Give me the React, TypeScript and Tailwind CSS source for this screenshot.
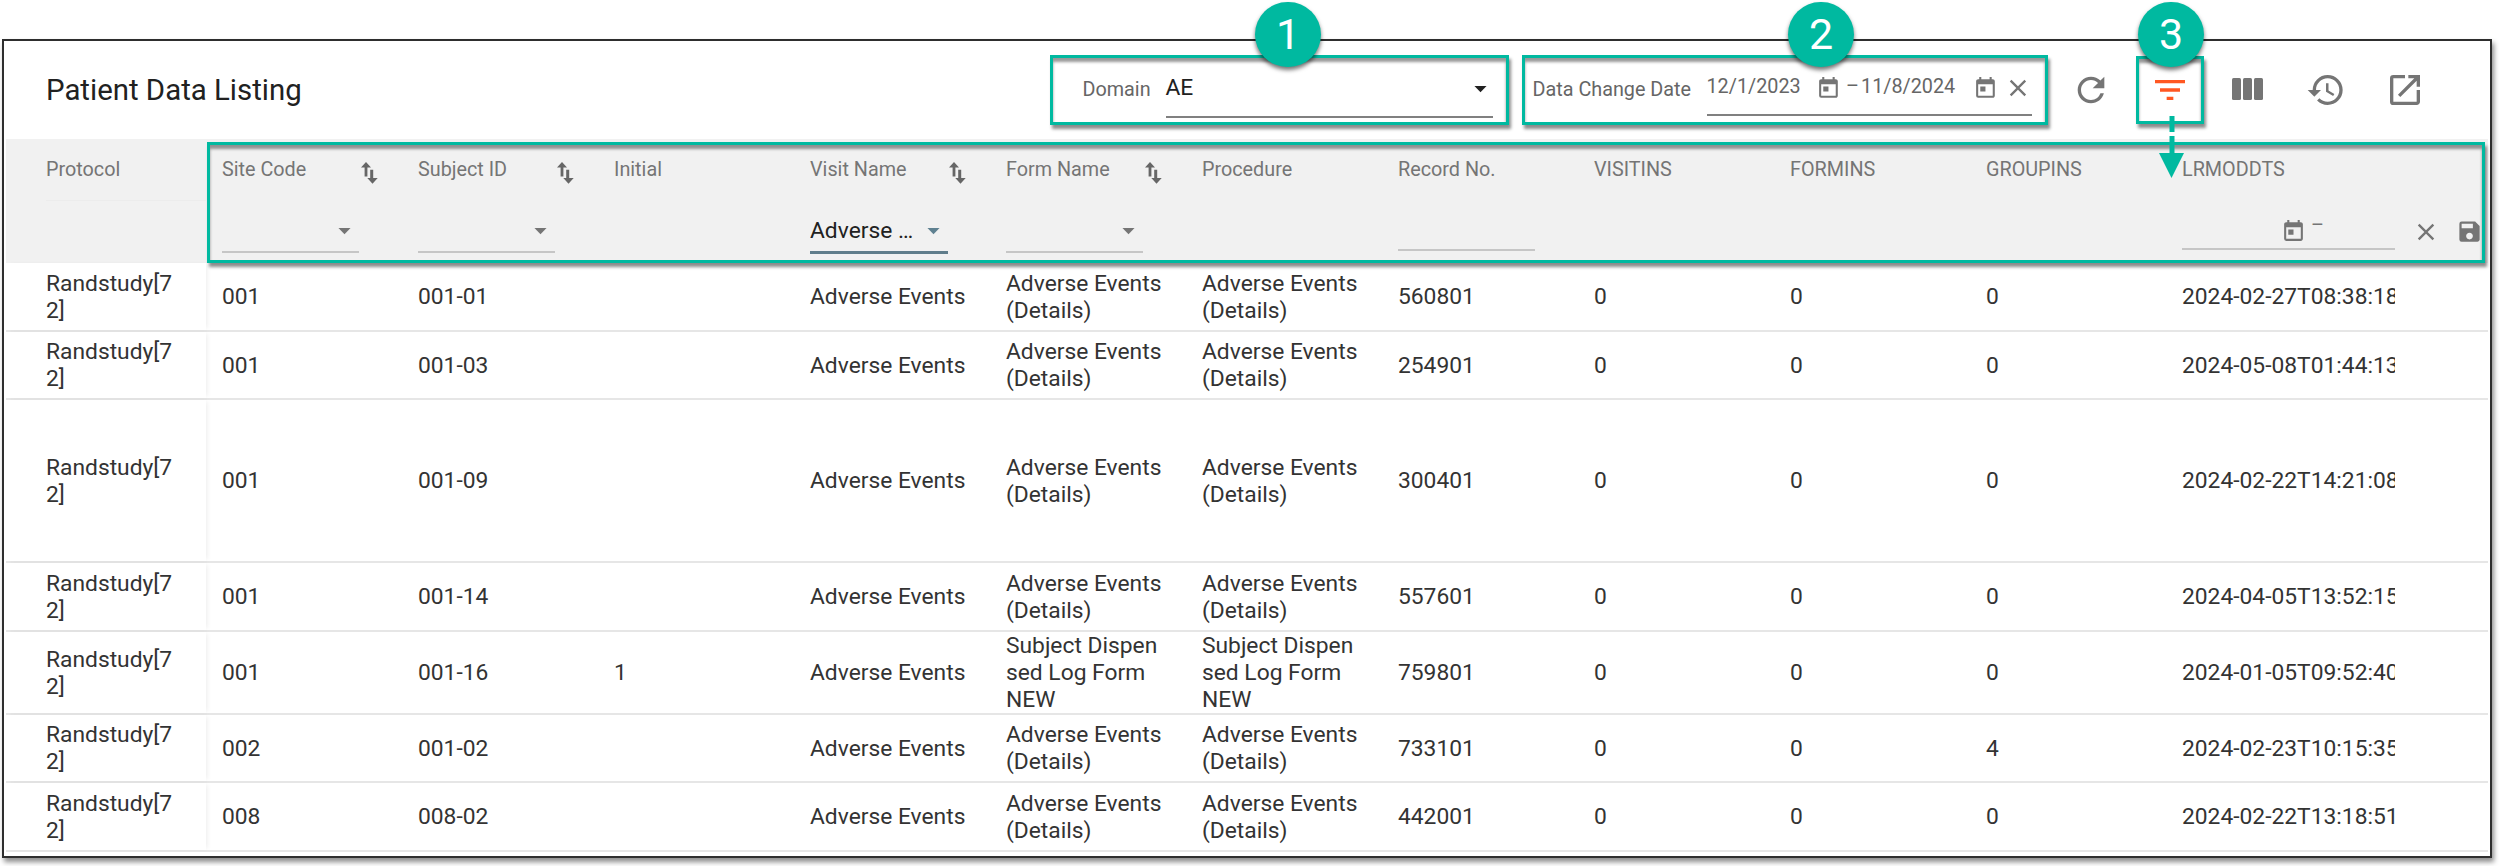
import { ReactNode } from "react";
import {
  MdArrowDropDown,
  MdClose,
  MdFilterList,
  MdHistory,
  MdOpenInNew,
  MdRefresh,
  MdSave,
  MdToday,
} from "react-icons/md";

const rows = [
  { h: "h-[69px]", site: "001", subject: "001-01", initial: "", record: "560801", group: "0", ts: "2024-02-27T08:38:18", form: "Adverse Events (Details)" },
  { h: "h-[68px]", site: "001", subject: "001-03", initial: "", record: "254901", group: "0", ts: "2024-05-08T01:44:13", form: "Adverse Events (Details)" },
  { h: "h-[163px]", site: "001", subject: "001-09", initial: "", record: "300401", group: "0", ts: "2024-02-22T14:21:08", form: "Adverse Events (Details)" },
  { h: "h-[69px]", site: "001", subject: "001-14", initial: "", record: "557601", group: "0", ts: "2024-04-05T13:52:15", form: "Adverse Events (Details)" },
  { h: "h-[83px]", site: "001", subject: "001-16", initial: "1", record: "759801", group: "0", ts: "2024-01-05T09:52:40", form: "Subject Dispensed Log Form NEW" },
  { h: "h-[68px]", site: "002", subject: "001-02", initial: "", record: "733101", group: "4", ts: "2024-02-23T10:15:35", form: "Adverse Events (Details)" },
  { h: "h-[69px]", site: "008", subject: "008-02", initial: "", record: "442001", group: "0", ts: "2024-02-22T13:18:51", form: "Adverse Events (Details)" },
];

const highlight =
  "border-[3px] border-[#00b9a0] shadow-[2px_4px_3px_rgba(0,0,0,0.45),inset_0_4px_3px_rgba(0,0,0,0.4)]";

function SortIcon() {
  return (
    <svg width="17" height="22" viewBox="0 0 17 22" className="mt-[6px] text-[#666666]" fill="currentColor">
      <path d="M0 5.5 5 0l5 5.5H6.4v9H3.6v-9z" />
      <path d="M9.2 7.7h3v8.3h4.5l-5.2 5.7L6.3 16h2.9z" />
    </svg>
  );
}

function Caret({ className = "text-[#757575]" }: { className?: string }) {
  return <MdArrowDropDown size={29} className={`shrink-0 ${className}`} />;
}

function HeadCell({ label, sort, children }: { label: string; sort?: boolean; children?: ReactNode }) {
  return (
    <div className="pl-4">
      <div className="flex h-[61px] items-center justify-between pr-6 text-[19.8px] text-[#757575]">
        <span>{label}</span>
        {sort && <SortIcon />}
      </div>
      {children}
    </div>
  );
}

function SelectFilter() {
  return (
    <div className="mt-4 flex h-[37px] w-[137px] items-start justify-end border-b-2 border-[#c6c6c6]">
      <Caret />
    </div>
  );
}

function Circle({ n, className }: { n: number; className: string }) {
  return (
    <div
      className={`absolute top-[2px] z-20 flex h-[65px] w-[66px] items-center justify-center rounded-full bg-[#00b9a0] text-[43px] leading-none text-white shadow-[0_3px_4px_rgba(0,0,0,0.55)] ${className}`}
    >
      {n}
    </div>
  );
}

export default function App() {
  return (
    <div className="relative h-[866px] w-[2500px] overflow-hidden bg-white pl-[2px] pt-[39px] font-['Roboto',sans-serif]">
      <Circle n={1} className="left-[1255px]" />
      <Circle n={2} className="left-[1788px]" />
      <Circle n={3} className="left-[2138px]" />

      {/* dashed arrow from the filter button to the filter row */}
      <svg width="26" height="64" viewBox="0 0 26 64" className="absolute left-[2159px] top-[116px] z-20" fill="#00b9a0">
        <rect x="10.5" y="0" width="5" height="16" />
        <rect x="10.5" y="20" width="5" height="17" />
        <path d="M0 37h25L12.5 62z" />
      </svg>

      <div className="h-[819px] w-[2490px] border-2 border-[#2e2e2e] shadow-[2px_4px_5px_rgba(0,0,0,0.45)]">
        {/* toolbar */}
        <div className="flex h-[98px] items-start pl-[42px] pr-[46px] pt-[14px]">
          <div className="flex h-[70px] flex-1 items-center text-[29.4px] text-[#212121]">Patient Data Listing</div>

          <div className={`flex h-[70px] w-[459px] ${highlight}`}>
            <span className="ml-[30px] mt-[20px] w-[83px] text-[19.8px] leading-[24px] text-[#666666]">Domain</span>
            <div className="flex h-[60px] w-[327px] items-center justify-between border-b-2 border-[#808080] pt-[2px]">
              <span className="text-[22.8px] text-[#212121]">AE</span>
              <Caret className="mr-[-2px] text-[#212121]" />
            </div>
          </div>

          <div className={`ml-[13px] flex h-[70px] w-[526px] ${highlight}`}>
            <span className="ml-[8px] mt-[20px] w-[174px] text-[19.8px] leading-[24px] text-[#666666]">Data Change Date</span>
            <div className="flex h-[58px] w-[325px] items-center border-b-2 border-[#808080] pt-[2px] text-[19.8px] text-[#666666]">
              <span className="w-[110px]">12/1/2023</span>
              <MdToday size={25} className="mt-[2px] text-[#757575]" />
              <span className="ml-[5px] mr-[2px]">–</span>
              <span className="w-[112px]">11/8/2024</span>
              <MdToday size={25} className="mt-[2px] text-[#757575]" />
              <MdClose size={28} className="ml-[6px] mt-[2px] text-[#757575]" />
            </div>
          </div>

          <div className="ml-[4px] flex h-[70px] text-[#757575]">
            <div className="flex w-[78.5px] items-center justify-center">
              <MdRefresh size={40} />
            </div>
            <div className="flex w-[78.5px] items-center justify-center">
              <div className={`ml-[2px] flex h-[68px] w-[68px] shrink-0 items-center justify-center ${highlight}`}>
                <MdFilterList size={40} className="text-[#ff5722]" />
              </div>
            </div>
            <div className="flex w-[78.5px] items-center justify-center">
              <svg width="31" height="22" viewBox="0 0 31 22" fill="currentColor" className="-mt-[3px]">
                <rect x="0" y="0" width="9" height="22" rx="1.5" />
                <rect x="11" y="0" width="9" height="22" rx="1.5" />
                <rect x="22" y="0" width="9" height="22" rx="1.5" />
              </svg>
            </div>
            <div className="flex w-[78.5px] items-center justify-center">
              <MdHistory size={40} />
            </div>
            <div className="flex w-[78.5px] items-center justify-center">
              <MdOpenInNew size={40} />
            </div>
          </div>
        </div>

        <div className="relative px-[2px]">
          {/* table head */}
          <div className="relative grid h-[124px] grid-cols-[200px_repeat(10,196px)_322px] bg-[#f1f1f1]">
            <div className="pl-[40px]">
              <div className="flex h-[62px] items-center border-b border-[#ececec] text-[19.8px] text-[#757575]">Protocol</div>
            </div>
            <HeadCell label="Site Code" sort>
              <SelectFilter />
            </HeadCell>
            <HeadCell label="Subject ID" sort>
              <SelectFilter />
            </HeadCell>
            <HeadCell label="Initial" />
            <HeadCell label="Visit Name" sort>
              <div className="mt-4 flex h-[38px] w-[138px] items-start justify-between border-b-[3px] border-[#607d8b]">
                <span className="w-[108px] truncate text-[22.8px] leading-[30px] text-[#212121]">Adverse Events</span>
                <Caret className="text-[#5f8191]" />
              </div>
            </HeadCell>
            <HeadCell label="Form Name" sort>
              <SelectFilter />
            </HeadCell>
            <HeadCell label="Procedure" />
            <HeadCell label="Record No.">
              <div className="mt-4 h-[35px] w-[137px] border-b-2 border-[#c6c6c6]" />
            </HeadCell>
            <HeadCell label="VISITINS" />
            <HeadCell label="FORMINS" />
            <HeadCell label="GROUPINS" />
            <HeadCell label="LRMODDTS">
              <div className="mt-4 flex items-start text-[#757575]">
                <div className="flex h-[34px] w-[213px] shrink-0 items-start border-b-2 border-[#c6c6c6] pl-[99px]">
                  <MdToday size={25} className="mt-[3px]" />
                  <span className="ml-[5px] text-[19.8px] leading-[20px]">–</span>
                </div>
                <MdClose size={28} className="ml-[17px] mt-[2px] shrink-0" />
                <MdSave size={27} className="ml-[16px] mt-[2px] shrink-0" />
              </div>
            </HeadCell>
            <div className={`pointer-events-none absolute bottom-0 left-[201px] right-[3px] top-[3px] ${highlight}`} />
          </div>

          {/* table body */}
          {rows.map((r) => (
            <div
              key={r.subject}
              className={`grid grid-cols-[200px_repeat(10,196px)_322px] border-b-2 border-[#e6e6e6] text-[22.8px] leading-[27px] text-[#333333] ${r.h}`}
            >
              <div className="relative z-10 flex items-center bg-white pl-[40px] shadow-[3px_0_5px_-2px_rgba(0,0,0,0.08)]">
                <span className="w-[134px] break-all">Randstudy[72]</span>
              </div>
              <div className="flex items-center pl-4">{r.site}</div>
              <div className="flex items-center pl-4">{r.subject}</div>
              <div className="flex items-center pl-4">{r.initial}</div>
              <div className="flex items-center pl-4">Adverse Events</div>
              <div className="flex items-center pl-4">
                <span className="w-[160px] break-all">{r.form}</span>
              </div>
              <div className="flex items-center pl-4">
                <span className="w-[160px] break-all">{r.form}</span>
              </div>
              <div className="flex items-center pl-4">{r.record}</div>
              <div className="flex items-center pl-4">0</div>
              <div className="flex items-center pl-4">0</div>
              <div className="flex items-center pl-4">{r.group}</div>
              <div className="flex items-center pl-4">
                <span className="w-[213px] overflow-hidden whitespace-nowrap">{r.ts}</span>
              </div>
            </div>
          ))}
        </div>
      </div>
    </div>
  );
}
